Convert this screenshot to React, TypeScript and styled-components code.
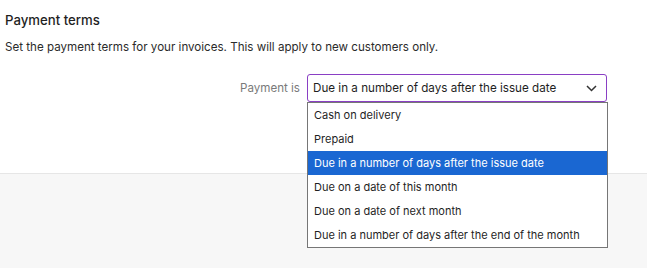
import React from "react";
import styled, { createGlobalStyle } from "styled-components";

const Global = createGlobalStyle`
  html, body { margin: 0; padding: 0; background: #f7f7f7; }
  body { font-family: Inter, "Noto Sans", "Liberation Sans", sans-serif; color: #222; }
`;

const Page = styled.div`
  display: flex;
  flex-direction: column;
  min-height: 268px;
`;

const Card = styled.section`
  background: #ffffff;
  height: 174px;
  box-sizing: border-box;
  padding: 11px 0 0 5px;
  box-shadow: 0 1px 2px rgba(0, 0, 0, 0.08);
  border-bottom: 1px solid #e6e6e6;
`;

const Title = styled.h2`
  margin: 0;
  font-size: 13.2px;
  font-weight: 500;
  line-height: 18px;
  color: #1f1f1f;
`;

const Description = styled.p`
  margin: 10px 0 0;
  font-size: 11.6px;
  line-height: 16px;
  color: #2b2b2b;
`;

const FieldRow = styled.div`
  display: flex;
  align-items: center;
  justify-content: flex-end;
  gap: 7px;
  margin-top: 19px;
  width: 602px;
`;

const Label = styled.label`
  white-space: nowrap;
  font-size: 11.6px;
  color: #7a7a7a;
`;

const SelectWrap = styled.div`
  position: relative;
  width: 300px;
`;

const SelectBox = styled.div`
  height: 28px;
  box-sizing: border-box;
  border: 1px solid #8a3fc4;
  border-radius: 3px;
  display: flex;
  align-items: center;
  justify-content: space-between;
  padding: 0 9px 0 5px;
  font-size: 11.65px;
  color: #1f1f1f;
  background: #fff;
`;

const Menu = styled.ul`
  position: absolute;
  top: 100%;
  left: 0;
  width: 301px;
  box-sizing: border-box;
  margin: 0;
  padding: 0;
  list-style: none;
  background: #fff;
  border: 1px solid #767676;
  z-index: 2;
`;

const Option = styled.li<{ $active?: boolean }>`
  height: 24px;
  line-height: 24px;
  padding-left: 6px;
  font-size: 11px;
  color: ${(p) => (p.$active ? "#ffffff" : "#1f1f1f")};
  background: ${(p) => (p.$active ? "#1a67d2" : "transparent")};
  white-space: nowrap;
`;

const Footer = styled.div`
  flex: 1;
  background: #f7f7f7;
`;

const options = [
  "Cash on delivery",
  "Prepaid",
  "Due in a number of days after the issue date",
  "Due on a date of this month",
  "Due on a date of next month",
  "Due in a number of days after the end of the month",
];

const Chevron = () => (
  <svg width="11" height="7" viewBox="0 0 11 7" fill="none">
    <path d="M1 1l4.5 4.5L10 1" stroke="#333" strokeWidth="1.5" />
  </svg>
);

export default function App() {
  return (
    <>
      <Global />
      <Page>
        <Card>
          <Title>Payment terms</Title>
          <Description>
            Set the payment terms for your invoices. This will apply to new customers only.
          </Description>
          <FieldRow>
            <Label>Payment is</Label>
            <SelectWrap>
              <SelectBox>
                <span>{options[2]}</span>
                <Chevron />
              </SelectBox>
              <Menu>
                {options.map((o, i) => (
                  <Option key={o} $active={i === 2}>
                    {o}
                  </Option>
                ))}
              </Menu>
            </SelectWrap>
          </FieldRow>
        </Card>
        <Footer />
      </Page>
    </>
  );
}
